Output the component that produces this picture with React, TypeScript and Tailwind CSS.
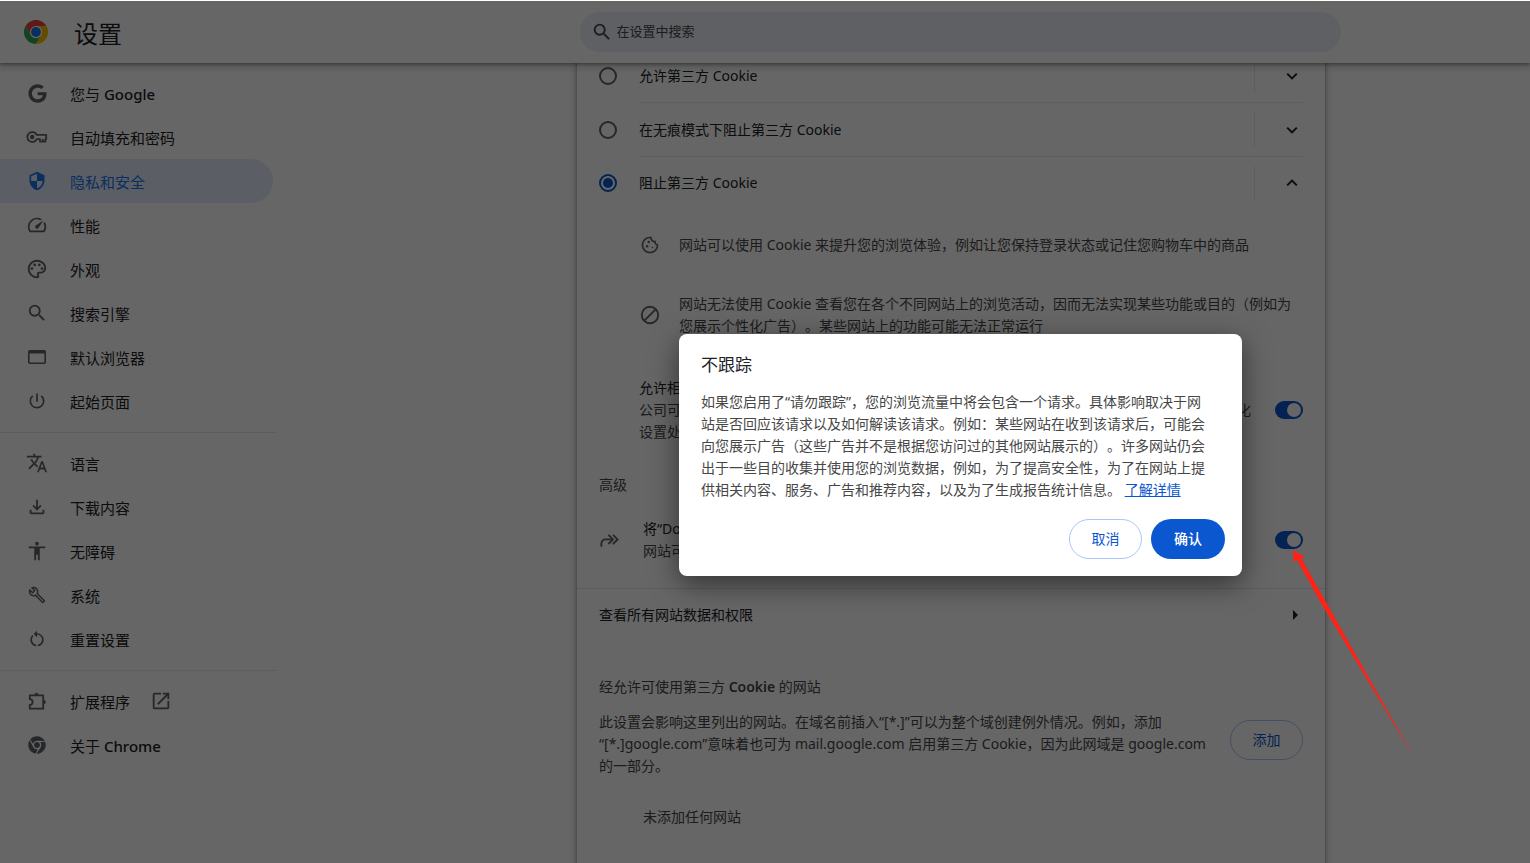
import React, { useState } from 'react';
import { FaChrome, FaGoogle } from 'react-icons/fa';
import {
  MdAccessibility,
  MdOpenInNew,
  MdOutlineBuild,
  MdOutlineCookie,
  MdOutlineFileDownload,
  MdOutlinePalette,
  MdPowerSettingsNew,
  MdRestartAlt,
  MdSearch,
  MdSecurity,
  MdSpeed,
  MdTranslate,
} from 'react-icons/md';

const KeyIcon = () => (
  <svg width="22" height="22" viewBox="0 0 22 22" fill="none" stroke="currentColor" strokeWidth="1.8">
    <path d="M10.7 8.9A4.9 4.9 0 1 0 10.7 13.1H14V15.6H19.4V13.1H20.2V8.9Z" strokeLinejoin="round" />
    <path d="M16.8 13v2.5" />
    <circle cx="6.2" cy="11" r="2.2" fill="currentColor" stroke="none" />
  </svg>
);

const WindowIcon = () => (
  <svg width="18" height="14" viewBox="0 0 18 14" fill="none" stroke="currentColor" strokeWidth="1.6">
    <rect x="0.8" y="0.8" width="16.4" height="12.4" rx="1" />
    <path d="M1 2.2h16" strokeWidth="2.6" />
  </svg>
);

const PuzzleIcon = () => (
  <svg width="19" height="19" viewBox="0 0 19 19" fill="currentColor">
    <path
      d="M1.8 3.3H15.2V16.7H1.8V12.8A2.7 2.7 0 0 0 1.8 7.2Z"
      fill="none"
      stroke="currentColor"
      strokeWidth="1.8"
      strokeLinejoin="round"
    />
    <path d="M6.4 2.8a2.1 2.1 0 0 1 4.2 0zM15.8 7.9a2.1 2.1 0 0 1 0 4.2z" />
  </svg>
);

const BlockIcon = () => (
  <svg width="20" height="20" viewBox="0 0 20 20" fill="none" stroke="currentColor" strokeWidth="1.9">
    <circle cx="10" cy="10" r="8.2" />
    <path d="M4.3 15.7 15.7 4.3" />
  </svg>
);

const ForwardIcon = () => (
  <svg width="20" height="20" viewBox="0 0 20 20" fill="none" stroke="currentColor" strokeWidth="1.9">
    <path d="M2.4 16.8V13.4A4 4 0 0 1 6.4 9.4H13.4" />
    <path d="M9.4 4.8 14 9.4 9.4 14M14 4.8 18.6 9.4 14 14" />
  </svg>
);

const ChromeLogo = () => (
  <svg width="24" height="24" viewBox="0 0 48 48">
    <path fill="#ea4335" d="M24 0C15.1 0 7.4 4.8 3.2 12l10.4 18L24 12h20.8C40.6 4.8 32.9 0 24 0z" />
    <path fill="#34a853" d="M3.2 12A24 24 0 0 0 24 48l10.4-18A12 12 0 0 1 13.6 30z" />
    <path fill="#fbbc04" d="M44.8 12H24a12 12 0 0 1 10.4 18L24 48a24 24 0 0 0 20.8-36z" />
    <circle cx="24" cy="24" r="12" fill="#fff" />
    <circle cx="24" cy="24" r="9.8" fill="#1a73e8" />
  </svg>
);

const Chevron = ({ open }: { open?: boolean }) => (
  <svg width="12" height="8" viewBox="0 0 12 8" fill="none" stroke="currentColor" strokeWidth="2">
    <path d={open ? 'M1.2 6.4 6 1.6l4.8 4.8' : 'M1.2 1.6 6 6.4l4.8-4.8'} />
  </svg>
);

const menuGroups = [
  [
    { icon: <FaGoogle size={19} />, label: '您与', latin: 'Google' },
    { icon: <KeyIcon />, label: '自动填充和密码' },
    { icon: <MdSecurity size={20} />, label: '隐私和安全', active: true },
    { icon: <MdSpeed size={22} />, label: '性能' },
    { icon: <MdOutlinePalette size={22} />, label: '外观' },
    { icon: <MdSearch size={22} />, label: '搜索引擎' },
    { icon: <WindowIcon />, label: '默认浏览器' },
    { icon: <MdPowerSettingsNew size={20} />, label: '起始页面' },
  ],
  [
    { icon: <MdTranslate size={22} />, label: '语言' },
    { icon: <MdOutlineFileDownload size={22} />, label: '下载内容' },
    { icon: <MdAccessibility size={22} />, label: '无障碍' },
    { icon: <MdOutlineBuild size={18} />, label: '系统' },
    { icon: <MdRestartAlt size={20} />, label: '重置设置' },
  ],
  [
    { icon: <PuzzleIcon />, label: '扩展程序', external: true },
    { icon: <FaChrome size={18} />, label: '关于', latin: 'Chrome' },
  ],
] as { icon: React.ReactNode; label: string; latin?: string; active?: boolean; external?: boolean }[][];

const cookieOptions = [
  { id: 'allow', label: '允许第三方 Cookie' },
  { id: 'incognito', label: '在无痕模式下阻止第三方 Cookie' },
  { id: 'block', label: '阻止第三方 Cookie' },
];

const toggleClass =
  'h-[18px] w-7 shrink-0 appearance-none rounded-full bg-[#80868b] p-[2px] before:block before:size-[14px] before:rounded-full before:bg-white checked:bg-[#0b57d0] checked:before:ml-auto';

function Sidebar() {
  return (
    <nav className="w-[276px] shrink-0 pt-2 text-[15px] text-[#202124]">
      {menuGroups.map((group, i) => (
        <div key={i}>
          {i > 0 && <hr className="mt-[9px] mb-2 border-[#e8e8e8]" />}
          {group.map((item) => (
            <a
              key={item.label}
              href="#"
              className={`mr-[3px] flex h-11 items-center gap-[22px] rounded-r-full pl-[26px] ${
                item.active ? 'bg-[#e3ebfd] text-[#1a73e8]' : ''
              }`}
            >
              <span className={`flex w-[22px] justify-center ${item.active ? '' : 'text-[#5f6368]'}`}>
                {item.icon}
              </span>
              <span className="pt-[2px]">
                {item.label}
                {item.latin && <span className="font-medium"> {item.latin}</span>}
              </span>
              {item.external && <MdOpenInNew size={22} className="-ml-[2px] text-[#5f6368]" />}
            </a>
          ))}
        </div>
      ))}
    </nav>
  );
}

function CookieSettings() {
  const [selected, setSelected] = useState('block');

  return (
    <section className="-mt-[14px] min-h-screen w-full max-w-[748px] bg-white text-sm leading-[22px] text-[#474747] shadow-[0_1px_3px_rgba(60,64,67,0.5),0_2px_7px_2px_rgba(60,64,67,0.2)]">
      <div className="px-[22px]">
        {cookieOptions.map((option, i) => (
          <div key={option.id} className="flex items-center">
            <input
              id={option.id}
              type="radio"
              name="cookies"
              checked={selected === option.id}
              onChange={() => setSelected(option.id)}
              className="mr-[22px] flex size-[18px] shrink-0 appearance-none items-center justify-center rounded-full border-2 border-[#5f6368] checked:border-[#0b57d0] checked:before:size-[10px] checked:before:rounded-full checked:before:bg-[#0b57d0]"
            />
            <div
              className={`flex flex-1 items-center border-[#e8eaed] ${i < 2 ? 'h-[54px] border-b' : 'h-[52px]'}`}
            >
              <label htmlFor={option.id} className="flex-1 text-[#202124]">
                {option.label}
              </label>
              <button
                aria-label="展开"
                className="flex h-[35px] w-[49px] items-center justify-center border-l border-[#e8eaed] pl-[26px] text-[#202124]"
              >
                <Chevron open={selected === option.id} />
              </button>
            </div>
          </div>
        ))}

        <div className="flex items-center gap-[19px] pt-[25px] pl-[41px]">
          <MdOutlineCookie size={20} className="shrink-0 text-[#5f6368]" />
          <p>网站可以使用 Cookie 来提升您的浏览体验，例如让您保持登录状态或记住您购物车中的商品</p>
        </div>
        <div className="flex items-center gap-[19px] pt-[37px] pl-[41px]">
          <span className="shrink-0 text-[#5f6368]">
            <BlockIcon />
          </span>
          <p>
            网站无法使用 Cookie 查看您在各个不同网站上的浏览活动，因而无法实现某些功能或目的（例如为
            <br />
            您展示个性化广告）。某些网站上的功能可能无法正常运行
          </p>
        </div>

        <div className="flex items-center justify-between pt-10 pl-10">
          <label htmlFor="related-sites">
            <span className="block text-[#202124]">允许相关网站查看您在群组中的活动记录</span>
            公司可以定义一组相关网站，让这些网站能够使用 Cookie 组内共享您的活动记录，从而提供个性化
            <br />
            设置处于关闭状态时，第三方 Cookie 会被阻止
          </label>
          <input id="related-sites" type="checkbox" defaultChecked className={toggleClass} />
        </div>

        <h2 className="pt-[31px]">高级</h2>
        <div className="flex items-center pt-[22px] pb-[26px]">
          <span className="shrink-0 text-[#5f6368]">
            <ForwardIcon />
          </span>
          <label htmlFor="do-not-track" className="flex-1 pl-6">
            <span className="block text-[#202124]">将“Do Not Track”请求与浏览流量一起发送</span>
            网站可自行决定是否遵循此请求
          </label>
          <input id="do-not-track" type="checkbox" defaultChecked className={toggleClass} />
        </div>
      </div>

      <button className="flex h-[53px] w-full items-center justify-between border-t border-[#e3e5e8] pr-[27px] pl-[22px] text-left text-[#202124]">
        查看所有网站数据和权限
        <svg width="5" height="10" viewBox="0 0 5 10" fill="currentColor">
          <path d="M0 0 5 5 0 10z" />
        </svg>
      </button>

      <div className="px-[22px]">
        <h2 className="pt-[35px]">
          经允许可使用第三方 <span className="font-semibold">Cookie</span> 的网站
        </h2>
        <div className="flex items-center justify-between pt-[13px]">
          <p>
            此设置会影响这里列出的网站。在域名前插入“[*.]”可以为整个域创建例外情况。例如，添加
            <br />
            “[*.]google.com”意味着也可为 mail.google.com 启用第三方 Cookie，因为此网域是 google.com
            <br />
            的一部分。
          </p>
          <button className="mb-2 h-10 w-[73px] shrink-0 rounded-full border border-[#a8c7fa] text-[#0b57d0]">
            添加
          </button>
        </div>
        <p className="pt-[29px] pl-11">未添加任何网站</p>
      </div>
    </section>
  );
}

function TrackingDialog() {
  return (
    <div className="absolute inset-x-0 top-px bottom-0 z-20 flex items-center justify-center bg-black/60 pt-[46px] pl-[391px]">
      <div
        role="dialog"
        aria-labelledby="dialog-title"
        className="w-full max-w-[563px] rounded-lg bg-white px-[22px] pt-5 pb-[17px] shadow-[0_8px_28px_rgba(0,0,0,0.5)]"
      >
        <h2 id="dialog-title" className="text-[17px] leading-[22px] text-[#202124]">
          不跟踪
        </h2>
        <p className="pt-[15px] text-sm leading-[22px] text-[#474747]">
          如果您启用了“请勿跟踪”，您的浏览流量中将会包含一个请求。具体影响取决于网
          <br />
          站是否回应该请求以及如何解读该请求。例如：某些网站在收到该请求后，可能会
          <br />
          向您展示广告（这些广告并不是根据您访问过的其他网站展示的）。许多网站仍会
          <br />
          出于一些目的收集并使用您的浏览数据，例如，为了提高安全性，为了在网站上提
          <br />
          供相关内容、服务、广告和推荐内容，以及为了生成报告统计信息。{' '}
          <a href="#" className="text-[#0b57d0] underline">
            了解详情
          </a>
        </p>
        <div className="-mr-[5px] flex justify-end gap-[9px] pt-[18px] text-sm">
          <button className="h-10 w-[73px] rounded-full border border-[#a8c7fa] text-[#0b57d0]">取消</button>
          <button className="h-10 w-[74px] rounded-full bg-[#0b57d0] font-medium text-white">确认</button>
        </div>
      </div>
      <svg className="absolute top-[549px] left-[1292px]" width="126" height="210" viewBox="0 0 126 210">
        <path d="M1 0 13 7 9.5 8.5 34.5 53 123 209 29.5 54 5 10 1.5 12z" fill="#ff2216" />
      </svg>
    </div>
  );
}

export default function App() {
  return (
    <div className="relative flex h-screen flex-col overflow-hidden bg-white font-['Noto_Sans','Noto_Sans_CJK_SC',sans-serif] [text-spacing-trim:space-all]">
      <header className="z-10 flex h-[63px] shrink-0 items-center bg-white shadow-[0_1px_3px_rgba(60,64,67,0.5),0_2px_7px_2px_rgba(60,64,67,0.25)]">
        <div className="flex w-[390px] shrink-0 items-center gap-[26px] pl-6">
          <ChromeLogo />
          <h1 className="pt-1 text-2xl text-[#202124]">设置</h1>
        </div>
        <div className="flex flex-1 justify-center">
          <label className="flex h-10 w-full max-w-[761px] items-center gap-1 rounded-full bg-[#edf0f9] pl-[11px] text-[#474747]">
            <MdSearch size={22} />
            <input
              type="text"
              aria-label="在设置中搜索"
              placeholder="在设置中搜索"
              className="flex-1 text-[13px] outline-none placeholder:text-[#474747]"
            />
          </label>
        </div>
      </header>
      <div className="flex min-h-0 flex-1">
        <Sidebar />
        <main className="flex flex-1 justify-center pl-24">
          <CookieSettings />
        </main>
      </div>
      <TrackingDialog />
    </div>
  );
}
